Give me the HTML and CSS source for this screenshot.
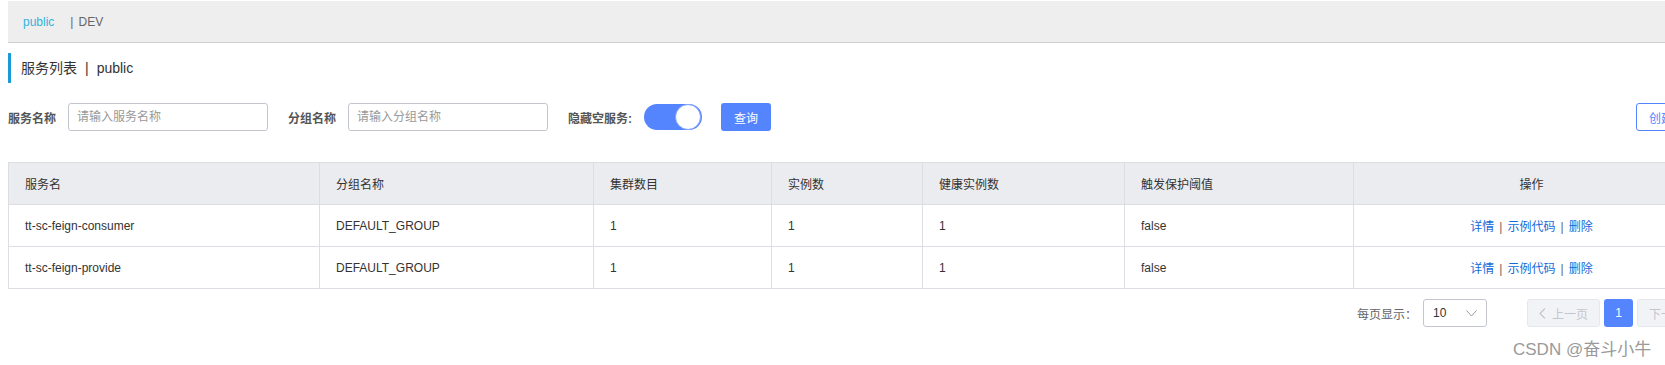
FILE: index.html
```html
<!DOCTYPE html>
<html lang="zh-CN">
<head>
    <meta charset="UTF-8">
    <title>服务列表</title>
    <link rel="stylesheet" href="styles.css">
</head>
<body>
    <div class="page">
        <div class="ns-bar">
            <a href="#" class="ns-current">public</a>
            <span class="ns-sep">|</span>
            <a href="#" class="ns-item">DEV</a>
        </div>

        <h1 class="page-title">服务列表<span class="title-sep">|</span>public</h1>

        <div class="search-row">
            <label class="field-label">服务名称</label>
            <input type="text" class="field-input" placeholder="请输入服务名称">
            <label class="field-label">分组名称</label>
            <input type="text" class="field-input" placeholder="请输入分组名称">
            <label class="field-label">隐藏空服务:</label>
            <span class="switch"><span class="switch-knob"></span></span>
            <button class="btn-primary">查询</button>
            <button class="btn-outline">创建服务</button>
        </div>

        <table class="service-table">
            <colgroup>
                <col style="width: 311px">
                <col style="width: 274px">
                <col style="width: 178px">
                <col style="width: 151px">
                <col style="width: 202px">
                <col style="width: 229px">
                <col>
            </colgroup>
            <thead>
                <tr>
                    <th>服务名</th>
                    <th>分组名称</th>
                    <th>集群数目</th>
                    <th>实例数</th>
                    <th>健康实例数</th>
                    <th>触发保护阈值</th>
                    <th class="center">操作</th>
                </tr>
            </thead>
            <tbody>
                <tr>
                    <td>tt-sc-feign-consumer</td>
                    <td>DEFAULT_GROUP</td>
                    <td>1</td>
                    <td>1</td>
                    <td>1</td>
                    <td>false</td>
                    <td class="center ops"><a href="#">详情</a><span>|</span><a href="#">示例代码</a><span>|</span><a href="#">删除</a></td>
                </tr>
                <tr>
                    <td>tt-sc-feign-provide</td>
                    <td>DEFAULT_GROUP</td>
                    <td>1</td>
                    <td>1</td>
                    <td>1</td>
                    <td>false</td>
                    <td class="center ops"><a href="#">详情</a><span>|</span><a href="#">示例代码</a><span>|</span><a href="#">删除</a></td>
                </tr>
            </tbody>
        </table>

        <div class="pager">
            <span class="pager-label">每页显示：</span>
            <span class="page-size">10
                <svg width="11" height="7" viewBox="0 0 11 7"><path d="M0.5 0.5 L5.5 6 L10.5 0.5" fill="none" stroke="#999" stroke-width="1"/></svg>
            </span>
            <span class="pager-btn disabled">
                <svg width="7" height="11" viewBox="0 0 7 11"><path d="M6 0.5 L1 5.5 L6 10.5" fill="none" stroke="#c4c6cf" stroke-width="1.2"/></svg>
                上一页
            </span>
            <span class="pager-num">1</span>
            <span class="pager-btn disabled">下一页
                <svg width="7" height="11" viewBox="0 0 7 11"><path d="M1 0.5 L6 5.5 L1 10.5" fill="none" stroke="#c4c6cf" stroke-width="1.2"/></svg>
            </span>
        </div>
    </div>

    <div class="watermark">CSDN @奋斗小牛</div>
</body>
</html>
```

FILE: styles.css
```css
body {
    margin: 0;
    padding: 0;
    overflow: hidden;
    font-family: "Liberation Sans", "Noto Sans CJK SC", sans-serif;
    font-size: 12px;
    color: #333;
    background: #fff;
}
.page {
    margin-left: 8px;
    width: 1702px;
}
.ns-bar {
    margin-top: 1px;
    height: 41px;
    background-color: #eeeeee;
    border-bottom: 1px solid #cfcfcf;
    display: flex;
    align-items: center;
    padding-left: 15px;
}
.ns-bar a {
    text-decoration: none;
}
.ns-current {
    color: #33b4dc;
}
.ns-sep {
    color: #666;
    margin-left: 16px;
    margin-right: 5px;
}
.ns-item {
    color: #666;
}
.page-title {
    margin: 10px 0 0 0;
    height: 30px;
    border-left: 3px solid #1b9ad7;
    padding-left: 10px;
    font-size: 14px;
    font-weight: normal;
    line-height: 30px;
    color: #333;
}
.title-sep {
    margin: 0 8px;
}
.search-row {
    margin-top: 20px;
    display: flex;
    align-items: center;
    height: 28px;
}
.field-label {
    font-weight: bold;
    color: #555;
    margin-right: 12px;
}
.field-input {
    box-sizing: border-box;
    width: 200px;
    height: 28px;
    border: 1px solid #c4c6cf;
    border-radius: 3px;
    padding: 0 8px;
    margin-right: 20px;
    font-family: inherit;
    font-size: 12px;
    color: #333;
    outline: none;
}
.field-input::placeholder {
    color: #999;
}
.switch {
    position: relative;
    width: 58px;
    height: 26px;
    border-radius: 13px;
    background-color: #5584ff;
    margin-right: 19px;
}
.switch-knob {
    position: absolute;
    right: 1px;
    top: 0;
    box-sizing: border-box;
    width: 26px;
    height: 26px;
    border-radius: 50%;
    background: #fff;
    border: 1px solid #7fa3ff;
}
.btn-primary {
    width: 50px;
    height: 28px;
    border: none;
    border-radius: 3px;
    background-color: #5584ff;
    color: #fff;
    font-family: inherit;
    font-size: 12px;
}
.btn-outline {
    margin-left: auto;
    height: 28px;
    padding: 0 12px;
    border: 1px solid #5584ff;
    border-radius: 3px;
    background: #fff;
    color: #5584ff;
    font-family: inherit;
    font-size: 12px;
}
.service-table {
    margin-top: 31px;
    width: 100%;
    table-layout: fixed;
    border-collapse: collapse;
    border: 1px solid #dcdee3;
}
.service-table th,
.service-table td {
    border: 1px solid #dcdee3;
    padding: 0 16px;
    text-align: left;
    font-weight: normal;
    color: #333;
}
.service-table th {
    height: 41px;
    background-color: #ebecf0;
}
.service-table td {
    height: 41px;
}
.service-table .center {
    text-align: center;
}
.ops a {
    color: #1469d9;
    text-decoration: none;
}
.ops span {
    color: #666;
    margin: 0 5px;
}
.pager {
    margin-top: 10px;
    display: flex;
    justify-content: flex-end;
    align-items: center;
    height: 28px;
}
.pager-label {
    color: #666;
    margin-right: 6px;
}
.page-size {
    box-sizing: border-box;
    width: 64px;
    height: 28px;
    border: 1px solid #c4c6cf;
    border-radius: 3px;
    display: flex;
    align-items: center;
    justify-content: space-between;
    padding: 0 9px;
    margin-right: 40px;
    color: #333;
}
.pager-btn {
    box-sizing: border-box;
    width: 73px;
    height: 28px;
    border: 1px solid #e6e7eb;
    border-radius: 3px;
    background-color: #f2f3f7;
    display: flex;
    align-items: center;
    justify-content: center;
    gap: 6px;
    color: #c4c6cf;
}
.pager-num {
    width: 29px;
    height: 28px;
    margin: 0 4px;
    border-radius: 3px;
    background-color: #5584ff;
    color: #fff;
    display: flex;
    align-items: center;
    justify-content: center;
}
.watermark {
    position: absolute;
    left: 1513px;
    top: 335px;
    font-size: 17px;
    color: #9a9a9a;
    white-space: nowrap;
}
```
